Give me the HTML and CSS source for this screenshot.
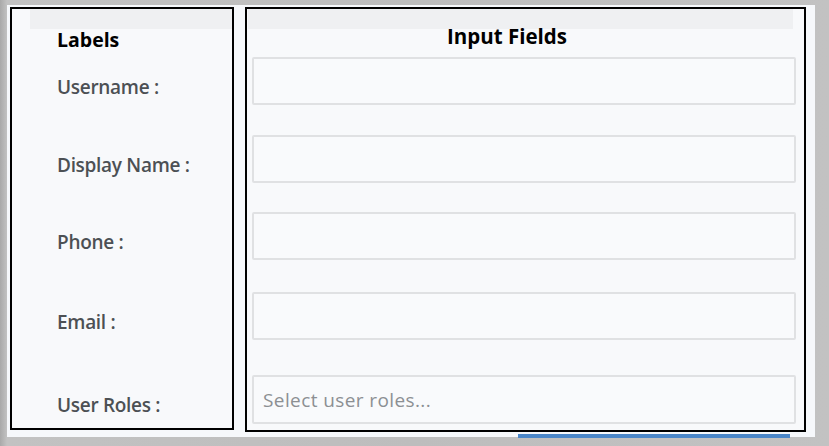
FILE: index.html
```html
<!DOCTYPE html>
<html lang="en">
<head>
<meta charset="utf-8">
<title>User form</title>
<link rel="stylesheet" href="styles.css">
</head>
<body>
<div class="screen">
  <section class="box labels-box">
    <div class="strip"></div>
    <h2 class="heading heading-labels">Labels</h2>
    <ul class="label-list">
      <li class="label-row r1">Username :</li>
      <li class="label-row r2">Display Name :</li>
      <li class="label-row r3">Phone :</li>
      <li class="label-row r4">Email :</li>
      <li class="label-row r5">User Roles :</li>
    </ul>
  </section>
  <div class="right-col">
    <section class="box fields-box">
      <div class="strip strip-wide"></div>
      <h2 class="heading heading-fields">Input Fields</h2>
      <div class="field-list">
        <div class="field r1"></div>
        <div class="field r2"></div>
        <div class="field r3"></div>
        <div class="field r4"></div>
        <div class="field r5 select"><span class="placeholder">Select user roles...</span></div>
      </div>
    </section>
    <div class="blue-bar"></div>
  </div>
</div>
</body>
</html>
```
FILE: styles.css
```css
* { box-sizing: border-box; }
html, body { margin: 0; padding: 0; }
body {
  width: 829px;
  height: 446px;
  overflow: hidden;
  background: linear-gradient(to right, #a9a9a9 0, #c2c2c2 7px, #bdbdbd 50%, #c2c2c2 100%);
  padding: 5px 14px 9px 7px;
  font-family: "Open Sans", "Noto Sans", sans-serif;
}
.screen {
  display: flex;
  align-items: flex-start;
  width: 808px;
  height: 432px;
  background: #f6f8fb;
  padding: 2px 0 0 3px;
}
.box {
  border: 2px solid #000;
  background: #f8f9fb;
}
.labels-box {
  width: 224px;
  height: 423px;
}
.right-col {
  margin-left: 11px;
  display: flex;
  flex-direction: column;
}
.fields-box {
  width: 561px;
  height: 425px;
}
.strip {
  height: 20px;
  margin-left: 18px;
  background: #eff0f2;
}
.strip-wide {
  margin-left: 1px;
  margin-right: 11px;
}
.heading {
  margin: 0;
  font-family: "Open Sans", "Noto Sans", sans-serif;
  font-weight: 700;
  line-height: 22px;
  color: #000;
}
.heading-labels {
  font-size: 19.5px;
  margin-top: 0;
  padding-left: 45px;
}
.heading-fields {
  font-size: 20.5px;
  margin-top: -4px;
  padding-left: 200px;
}
.label-list {
  list-style: none;
  margin: 0;
  padding: 0 0 0 45px;
}
.label-row {
  height: 48px;
  display: flex;
  align-items: center;
  font-size: 19px;
  font-weight: 600;
  color: #4c5054;
  letter-spacing: -0.3px;
}
.label-list .r1 { margin-top: 12px; }
.field-list {
  padding: 0 8px 0 5px;
}
.field {
  height: 48px;
  border: 2px solid #e0e1e3;
  border-radius: 2px;
  background: #f9fafc;
}
.field-list .r1 { margin-top: 10px; }
.r2 { margin-top: 30px; }
.r3 { margin-top: 29px; }
.r4 { margin-top: 32px; }
.r5 { margin-top: 35px; }
.field.r5 { height: 49px; }
.select {
  display: flex;
  align-items: center;
  padding-left: 9px;
}
.placeholder {
  font-size: 19px;
  color: #8c8f93;
  letter-spacing: 0.4px;
}
.blue-bar {
  margin: 2px 0 0 273px;
  width: 272px;
  height: 4px;
  background: #4a86c8;
}
```
